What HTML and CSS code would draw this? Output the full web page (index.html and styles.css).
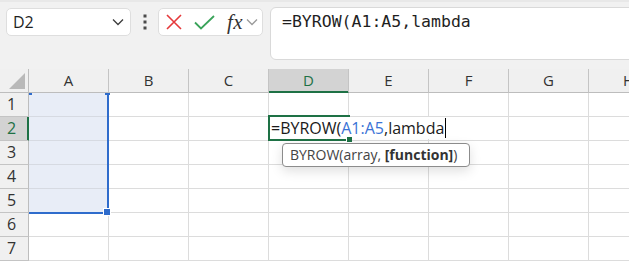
FILE: index.html
```html
<!DOCTYPE html>
<html lang="en">
<head>
  <meta charset="UTF-8">
  <title>Book1 - Excel</title>
  <link rel="stylesheet" href="styles.css">
</head>
<body>
  <div class="toolbar">
    <div class="namebox">
      <span class="name">D2</span>
      <svg class="chev" width="12" height="8" viewBox="0 0 12 8"><polyline points="1,1.5 6,6.5 11,1.5" fill="none" stroke="#3c3c3c" stroke-width="1.3"/></svg>
    </div>
    <div class="grip">
      <svg width="4" height="16" viewBox="0 0 4 16"><rect x="0.5" y="0.5" width="3" height="3" fill="#4a4a4a"/><rect x="0.5" y="6.5" width="3" height="3" fill="#4a4a4a"/><rect x="0.5" y="12.5" width="3" height="3" fill="#4a4a4a"/></svg>
    </div>
    <div class="fxbtns">
      <svg class="cancel" width="16" height="16" viewBox="0 0 16 16"><path d="M1 1 L15 15 M15 1 L1 15" stroke="#e5393b" stroke-width="1.6" fill="none"/></svg>
      <svg class="enter" width="21" height="15" viewBox="0 0 21 15"><polyline points="1,7.5 7,13.5 20,1" fill="none" stroke="#3aa35a" stroke-width="1.8"/></svg>
      <span class="fx">fx</span>
      <svg class="chev small" width="12" height="8" viewBox="0 0 12 8"><polyline points="1,1.5 6,6.5 11,1.5" fill="none" stroke="#9a9a9a" stroke-width="1.3"/></svg>
    </div>
    <div class="formula">=BYROW(A1:A5,lambda</div>
  </div>

  <div class="sheet">
    <div class="grid">
      <div class="corner"><svg width="17" height="17" viewBox="0 0 17 17"><polygon points="16,1 16,17 0,17" fill="#b9b9b9"/></svg></div>
      <div class="hd">A</div><div class="hd">B</div><div class="hd">C</div><div class="hd active">D</div><div class="hd">E</div><div class="hd">F</div><div class="hd">G</div><div class="hd">H</div>

      <div class="rh">1</div><div class="c sel"></div><div class="c"></div><div class="c"></div><div class="c"></div><div class="c"></div><div class="c"></div><div class="c"></div><div class="c"></div>
      <div class="rh active">2</div><div class="c sel"></div><div class="c"></div><div class="c"></div><div class="c"></div><div class="c"></div><div class="c"></div><div class="c"></div><div class="c"></div>
      <div class="rh">3</div><div class="c sel"></div><div class="c"></div><div class="c"></div><div class="c"></div><div class="c"></div><div class="c"></div><div class="c"></div><div class="c"></div>
      <div class="rh">4</div><div class="c sel"></div><div class="c"></div><div class="c"></div><div class="c"></div><div class="c"></div><div class="c"></div><div class="c"></div><div class="c"></div>
      <div class="rh">5</div><div class="c sel"></div><div class="c"></div><div class="c"></div><div class="c"></div><div class="c"></div><div class="c"></div><div class="c"></div><div class="c"></div>
      <div class="rh">6</div><div class="c"></div><div class="c"></div><div class="c"></div><div class="c"></div><div class="c"></div><div class="c"></div><div class="c"></div><div class="c"></div>
      <div class="rh">7</div><div class="c"></div><div class="c"></div><div class="c"></div><div class="c"></div><div class="c"></div><div class="c"></div><div class="c"></div><div class="c"></div>
    </div>

    <!-- range A1:A5 referenced by the formula -->
    <div class="range">
      <span class="tick tl"></span>
      <span class="tick tr"></span>
      <span class="handle"></span>
    </div>

    <!-- in-cell editor on D2 -->
    <div class="editor">
      <span class="edit-text">=BYROW(<span class="ref">A1:A5</span>,lambda<span class="caret"></span></span>
      <span class="edit-handle"></span>
    </div>

    <div class="tip">BYROW(array, <b>[function]</b>)</div>
  </div>
</body>
</html>
```

FILE: styles.css
```css
:root {
  --xl-green: #1e7145;
  --sel-blue: #2f6ccc;
  --grid-line: #dcdcdc;
  --head-bg: #f0f0f0;
  --head-line: #c4c4c4;
}
body {
  margin: 0;
  width: 629px;
  height: 262px;
  overflow: hidden;
  background: #ffffff;
  font-family: "Open Sans", "Noto Sans", sans-serif;
  color: #262626;
}

/* ---------- formula bar ---------- */
.toolbar {
  height: 69px;
  background: #f1f1f1;
  border-top: 2px solid #e8e8e8;
  box-sizing: border-box;
  display: flex;
  align-items: flex-start;
  padding: 5px 0 0 6px;
  overflow: hidden;
}
.toolbar > * {
  flex-shrink: 0;
}
.namebox {
  width: 125px;
  height: 28px;
  margin-top: 1px;
  box-sizing: border-box;
  background: #fff;
  border: 1px solid #dedede;
  border-radius: 5px;
  display: flex;
  align-items: center;
  justify-content: space-between;
  padding: 0 6px 0 6px;
}
.name {
  font-size: 16px;
  color: #1f1f1f;
}
.grip {
  width: 27px;
  height: 30px;
  display: flex;
  align-items: center;
  justify-content: center;
}
.fxbtns {
  width: 105px;
  height: 28px;
  margin-top: 1px;
  box-sizing: border-box;
  background: #fff;
  border: 1px solid #dedede;
  border-radius: 5px;
  display: flex;
  align-items: center;
  padding-left: 7px;
}
.enter {
  margin-left: 12px;
}
.fx {
  margin-left: 12px;
  font-family: "Liberation Serif", "DejaVu Serif", serif;
  font-style: italic;
  font-size: 21px;
  line-height: 20px;
  color: #333;
  letter-spacing: 0.5px;
}
.chev.small {
  margin-left: 3px;
}
.formula {
  margin-left: 7px;
  width: 380px;
  height: 53px;
  box-sizing: border-box;
  background: #fff;
  border: 1px solid #d9d9d9;
  border-radius: 6px;
  padding: 4px 11px;
  font-family: "DejaVu Sans Mono", monospace;
  font-size: 16.5px;
  line-height: 20px;
  color: #1f1f1f;
  white-space: nowrap;
}

/* ---------- grid ---------- */
.sheet {
  position: relative;
}
.grid {
  display: grid;
  grid-template-columns: 29px repeat(8, 80px);
  grid-auto-rows: 24px;
}
.grid > div {
  box-sizing: border-box;
  border-right: 1px solid var(--grid-line);
  border-bottom: 1px solid var(--grid-line);
}
.grid > .corner {
  background: var(--head-bg);
  border-right: 1px solid #bdbdbd;
  border-bottom: 1px solid #bdbdbd;
  padding: 3px 0 0 9px;
}
.corner svg {
  display: block;
}
.grid > .hd {
  background: var(--head-bg);
  border-right-color: var(--head-line);
  border-bottom-color: #bdbdbd;
  text-align: center;
  font-size: 15px;
  line-height: 23px;
  color: #333;
}
.grid > .hd.active {
  background: #d3d3d3;
  color: var(--xl-green);
  border-bottom-color: var(--xl-green);
  box-shadow: inset 0 -1px 0 var(--xl-green);
}
.grid > .rh {
  background: var(--head-bg);
  border-right-color: #bdbdbd;
  border-bottom-color: var(--head-line);
  text-align: center;
  padding-right: 5px;
  font-size: 16px;
  line-height: 23px;
  color: #333;
}
.grid > .rh.active {
  background: #d3d3d3;
  color: var(--xl-green);
  border-right-color: var(--xl-green);
  box-shadow: inset -1px 0 0 var(--xl-green);
}
.grid > .c.sel {
  background: #e8edf7;
  border-bottom-color: #d6dae2;
}

/* range highlight */
.range {
  position: absolute;
  left: 29px;
  top: 24px;
  width: 80px;
  height: 121px;
  box-sizing: border-box;
  border-right: 2px solid var(--sel-blue);
  border-bottom: 2px solid var(--sel-blue);
}
.tick {
  position: absolute;
  top: 0;
  height: 2px;
  background: var(--sel-blue);
}
.tick.tl {
  left: 0;
  width: 3px;
}
.tick.tr {
  right: -3px;
  width: 5px;
}
.handle {
  position: absolute;
  right: -4px;
  bottom: -4px;
  width: 6px;
  height: 6px;
  background: var(--sel-blue);
  border: 1px solid #fff;
}

/* editor */
.editor {
  position: absolute;
  left: 268px;
  top: 46px;
  width: 82px;
  height: 26px;
  box-sizing: border-box;
  border: 2px solid var(--xl-green);
  border-right: none;
}
.edit-text {
  position: absolute;
  left: 0;
  top: 0;
  padding: 0 2px 0 1px;
  height: 22px;
  background: #fff;
  white-space: nowrap;
  font-size: 16px;
  line-height: 22px;
  color: #1a1a1a;
}
.ref {
  color: #3a73d6;
}
.caret {
  display: inline-block;
  width: 1px;
  height: 20px;
  margin-left: 1px;
  background: #000;
  vertical-align: -4px;
}
.edit-handle {
  position: absolute;
  right: -2px;
  bottom: -4px;
  width: 5px;
  height: 5px;
  background: var(--xl-green);
  border: 1px solid #fff;
  border-right: none;
}

/* function tooltip */
.tip {
  position: absolute;
  left: 282px;
  top: 74px;
  width: 188px;
  height: 24px;
  box-sizing: border-box;
  background: #fff;
  border: 1px solid #8c8c8c;
  border-radius: 4px;
  box-shadow: 0 4px 12px rgba(0, 0, 0, 0.13);
  padding-left: 7px;
  font-size: 14px;
  line-height: 22px;
  color: #444;
  white-space: nowrap;
}
.tip b {
  font-weight: 700;
  color: #333;
}
```
